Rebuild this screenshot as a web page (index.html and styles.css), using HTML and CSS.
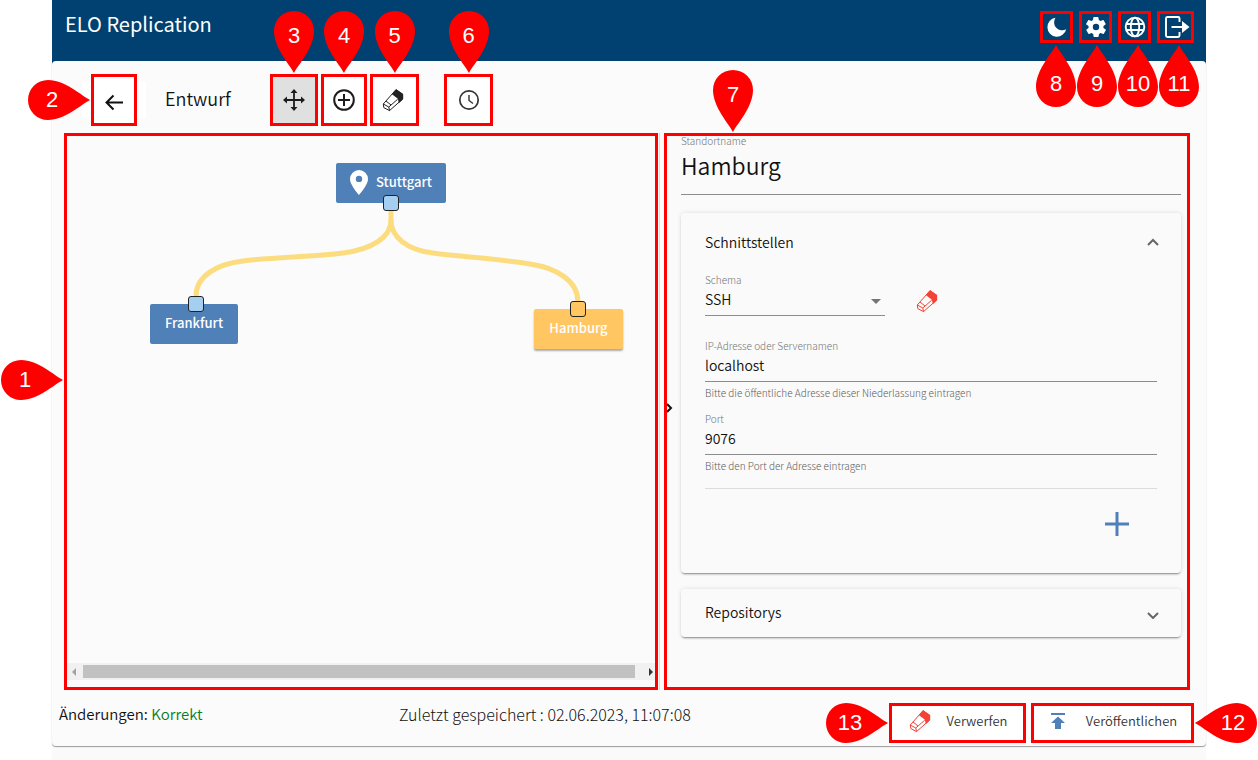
FILE: index.html
```html
<!DOCTYPE html>
<html lang="de">
<head>
<meta charset="utf-8">
<meta name="viewport" content="width=device-width, initial-scale=1">
<title>ELO Replication</title>
<link rel="stylesheet" href="styles.css">
</head>
<body>
<svg class="defs" aria-hidden="true">
  <symbol id="drop" viewBox="0 0 40 62"><path d="M20 62C16 54 0 37 0 20A20 20 0 0 1 40 20C40 37 24 54 20 62Z" fill="#f00"/></symbol>
  <symbol id="drop-up" viewBox="0 0 40 62"><path d="M20 0C16 8 0 25 0 42A20 20 0 0 0 40 42C40 25 24 8 20 0Z" fill="#f00"/></symbol>
  <symbol id="drop-right" viewBox="0 0 62 40"><path d="M62 20C54 16 37 0 20 0A20 20 0 0 0 20 40C37 40 54 24 62 20Z" fill="#f00"/></symbol>
  <symbol id="drop-left" viewBox="0 0 62 40"><path d="M0 20C8 16 25 0 42 0A20 20 0 0 1 42 40C25 40 8 24 0 20Z" fill="#f00"/></symbol>
  <symbol id="eraser" viewBox="0 0 24 24">
    <path d="M2.300 16L15 1.600L21.700 6.200V11L8.500 22.600L2.800 19.600Z" fill="none" stroke="currentColor" stroke-width="1" stroke-linejoin="round"/>
    <path d="M11 6.200L15 1.300L22 6V11.300L17.800 15.200L16.900 10.800Z" fill="currentColor"/>
    <path d="M2.300 16L7.800 19L16.700 11.200M7.800 19L8.500 22.600M5 13L10 17" fill="none" stroke="currentColor" stroke-width="1"/>
  </symbol>
</svg>

<div class="app">
  <header class="topbar">
    <h1 class="brand">ELO Replication</h1>
    <div class="top-actions">
      <button class="marked top-button" aria-label="Dunkelmodus"><svg width="24" height="24" viewBox="0 0 24 24"><path d="M10.500 2.800A9.500 9.500 0 1 0 21.200 14.200A8 8 0 0 1 10.500 2.800Z" fill="#fff"/></svg></button>
      <button class="marked top-button" aria-label="Einstellungen"><svg width="24" height="24" viewBox="0 0 24 24"><path d="M19.400 13c0-.3.1-.6.1-1s0-.7-.1-1l2.100-1.600c.2-.2.3-.4.1-.6l-2-3.500c-.1-.2-.4-.3-.6-.2l-2.500 1c-.5-.4-1.100-.7-1.700-1l-.4-2.600c0-.3-.2-.5-.5-.5h-4c-.2 0-.5.2-.5.4l-.4 2.700c-.6.2-1.100.6-1.700 1l-2.500-1c-.2-.1-.5 0-.6.2l-2 3.500c-.1.2-.1.5.1.6L4.600 11c0 .3-.1.7-.1 1s0 .7.1 1l-2.100 1.600c-.2.2-.3.4-.1.6l2 3.500c.1.2.4.3.6.2l2.500-1c.5.4 1.100.7 1.700 1l.4 2.600c0 .3.2.5.5.5h4c.3 0 .5-.2.5-.5l.4-2.600c.6-.3 1.200-.6 1.700-1l2.500 1c.2.1.5 0 .6-.2l2-3.500c.1-.2.1-.5-.1-.6zM12 15.200a3.200 3.200 0 1 1 0-6.400a3.200 3.200 0 0 1 0 6.400z" fill="#fff"/></svg></button>
      <button class="marked top-button" aria-label="Sprache"><svg width="24" height="24" viewBox="0 0 24 24" fill="none" stroke="#fff" stroke-width="1.900"><circle cx="12" cy="12" r="9.300"/><ellipse cx="12" cy="12" rx="4.200" ry="9.300"/><path d="M3.500 9H20.500M3.500 15H20.500"/></svg></button>
      <button class="marked top-button wide" aria-label="Abmelden"><svg width="28" height="24" viewBox="0 0 28 24"><path d="M17.500 7V3.500A1.500 1.500 0 0 0 16 2H5.500A1.500 1.500 0 0 0 4 3.500V20.500A1.500 1.500 0 0 0 5.500 22H16A1.500 1.500 0 0 0 17.500 20.500V17" fill="none" stroke="#fff" stroke-width="1.900"/><path d="M9.500 12H21" stroke="#fff" stroke-width="2"/><path d="M20 6L27.500 12L20 18Z" fill="#fff"/></svg></button>
    </div>
    <div class="top-pins">
      <span class="pin up"><svg><use href="#drop-up"/></svg><b>8</b></span>
      <span class="pin up"><svg><use href="#drop-up"/></svg><b>9</b></span>
      <span class="pin up"><svg><use href="#drop-up"/></svg><b>10</b></span>
      <span class="pin up"><svg><use href="#drop-up"/></svg><b>11</b></span>
    </div>
  </header>

  <main class="sheet">
    <div class="toolbar">
      <div class="back">
        <div class="tool">
          <button class="marked tool-button back-button" aria-label="Zurück"><svg width="20" height="20" viewBox="0 0 20 20" fill="none" stroke="#111" stroke-width="2"><path d="M19 10.500H2.500M9.500 3.500L2.500 10.500L9.500 17.500"/></svg></button>
          <span class="pin right"><svg><use href="#drop-right"/></svg><b>2</b></span>
        </div>
      </div>
      <h2 class="title">Entwurf</h2>
      <div class="tools">
        <div class="tool">
          <button class="marked tool-button active" aria-label="Verschieben"><svg width="22" height="22" viewBox="0 0 22 22"><path d="M11 3V19M3 11H19" stroke="#1c1c1c" stroke-width="1.800"/><path d="M11 0L14.500 4H7.500ZM11 22L14.500 18H7.500ZM0 11L4 7.500V14.500ZM22 11L18 7.500V14.500Z" fill="#1c1c1c"/></svg></button>
          <span class="pin down"><svg><use href="#drop"/></svg><b>3</b></span>
        </div>
        <div class="tool">
          <button class="marked tool-button narrow" aria-label="Hinzufügen"><svg width="22" height="22" viewBox="0 0 22 22" fill="none" stroke="#1c1c1c" stroke-width="2"><circle cx="11" cy="11" r="9.800"/><path d="M11 5V17M5 11H17"/></svg></button>
          <span class="pin down"><svg><use href="#drop"/></svg><b>4</b></span>
        </div>
        <div class="tool">
          <button class="marked tool-button erase" aria-label="Löschen"><svg class="dark" width="24" height="24"><use href="#eraser"/></svg></button>
          <span class="pin down"><svg><use href="#drop"/></svg><b>5</b></span>
        </div>
      </div>
      <div class="tool">
        <button class="marked tool-button" aria-label="Zeitplan"><svg width="22" height="22" viewBox="0 0 22 22" fill="none" stroke="#333" stroke-width="1.700"><circle cx="11" cy="11" r="9.200"/><path d="M11 6V11.500L15 14.500" stroke-width="1.400"/></svg></button>
        <span class="pin down"><svg><use href="#drop"/></svg><b>6</b></span>
      </div>
    </div>

    <div class="workspace">
      <section class="marked graph">
        <div class="canvas">
          <svg class="links" width="588" height="300" viewBox="0 0 588 300" fill="none" stroke="#fbdd80" stroke-width="5"><path d="M324 66V84C324 101 306 113 276 117C246 121 206 121 176 125C150 128 129 140 129 160"/><path d="M324 84C324 101 340 114 366 117C396 121 433 123 463 128C490 132 511 145 511 166"/></svg>
          <div class="node stuttgart"><svg width="18" height="25" viewBox="0 0 18 25"><path fill-rule="evenodd" d="M9 0A9 9 0 0 0 0 9C0 15 9 25 9 25C9 25 18 15 18 9A9 9 0 0 0 9 0ZM9 5.700A3.200 3.200 0 1 1 9 12.100A3.200 3.200 0 0 1 9 5.700Z" fill="#fff"/></svg>Stuttgart</div>
          <div class="node frankfurt">Frankfurt</div>
          <div class="node hamburg">Hamburg</div>
          <i class="port port-stuttgart"></i>
          <i class="port port-frankfurt"></i>
          <i class="port port-hamburg"></i>
        </div>
        <div class="scrollbar"><i class="arrow-left"></i><i class="thumb"></i><i class="arrow-right"></i></div>
        <span class="pin right pin-graph"><svg><use href="#drop-right"/></svg><b>1</b></span>
      </section>

      <div class="splitter"></div>

      <section class="marked details">
        <svg class="handle" width="6" height="12" viewBox="0 0 6 12" fill="none" stroke="#111" stroke-width="2"><path d="M0 2L4 6L0 10"/></svg>
        <div class="name-field">
          <label for="site">Standortname</label>
          <input id="site" type="text" value="Hamburg">
        </div>
        <div class="card">
          <button class="card-head open">Schnittstellen<svg width="12" height="8" viewBox="0 0 12 8" fill="none" stroke="#666" stroke-width="2"><path d="M1 7L6 2L11 7"/></svg></button>
          <div class="card-body">
            <div class="schema-row">
              <div class="field schema">
                <label for="schema">Schema</label>
                <select id="schema"><option>SSH</option></select>
              </div>
              <button class="icon-button" aria-label="Schnittstelle löschen"><svg class="red" width="24" height="24"><use href="#eraser"/></svg></button>
            </div>
            <div class="field">
              <label for="host">IP-Adresse oder Servernamen</label>
              <input id="host" type="text" value="localhost">
              <p class="hint">Bitte die öffentliche Adresse dieser Niederlassung eintragen</p>
            </div>
            <div class="field">
              <label for="port">Port</label>
              <input id="port" type="text" value="9076">
              <p class="hint">Bitte den Port der Adresse eintragen</p>
            </div>
            <hr>
            <div class="add-row"><button class="icon-button" aria-label="Schnittstelle hinzufügen"><svg width="24" height="24" viewBox="0 0 24 24" stroke="#5080b8" stroke-width="3"><path d="M12 0V24M0 12H24"/></svg></button></div>
          </div>
        </div>
        <div class="card">
          <button class="card-head">Repositorys<svg width="12" height="14" viewBox="0 0 12 14" fill="none" stroke="#666" stroke-width="2"><path d="M1 8L6 13L11 8"/></svg></button>
        </div>
        <span class="pin down pin-details"><svg><use href="#drop"/></svg><b>7</b></span>
      </section>
    </div>

    <footer class="footer">
      <p class="state">Änderungen: <span class="ok">Korrekt</span></p>
      <p class="saved">Zuletzt gespeichert : <time>02.06.2023, 11:07:08</time></p>
      <div class="foot-actions">
        <div class="tool">
          <button class="marked action"><svg class="red" width="24" height="24"><use href="#eraser"/></svg>Verwerfen</button>
          <span class="pin right"><svg><use href="#drop-right"/></svg><b>13</b></span>
        </div>
        <div class="tool">
          <button class="marked action publish"><svg width="16" height="16" viewBox="0 0 16 16" fill="#5080b8"><path d="M1 0H15V2H1ZM8 3.500L15 10H11V16H5V10H1Z"/></svg>Veröffentlichen</button>
          <span class="pin left"><svg><use href="#drop-left"/></svg><b>12</b></span>
        </div>
      </div>
    </footer>
  </main>
</div>
</body>
</html>
```

FILE: styles.css
```css
* { box-sizing: border-box; }

body {
  margin: 0;
  background: #fff;
  color: #111;
  font-family: "Noto Sans CJK SC", "Source Sans Pro", sans-serif;
  font-size: 14px;
  font-weight: 350;
  line-height: 20px;
}

h1, h2, p { margin: 0; font-weight: inherit; }
button, input, select { font: inherit; color: inherit; }
button { padding: 0; border: 0; background: none; display: flex; align-items: center; justify-content: center; }
.defs { position: absolute; width: 0; height: 0; }

.app {
  display: flex;
  flex-direction: column;
  min-height: 100vh;
  margin: 0 52px;
  padding-bottom: 14px;
  background: linear-gradient(#004171 80px, #fafafa 80px);
}

.marked { border: 3px solid #f00; }

/* Numbered callouts */
.pin { position: absolute; width: 40px; height: 62px; z-index: 5; }
.pin svg { display: block; width: 100%; height: 100%; }
.pin b {
  position: absolute;
  inset: 0;
  display: flex;
  align-items: center;
  justify-content: center;
  color: #fff;
  font: 400 22px/24px "Liberation Sans", Arial, sans-serif;
}
.pin.down b { padding-bottom: 12px; }
.pin.up b { padding-top: 16px; }
.pin.right, .pin.left { width: 62px; height: 40px; }
.pin.right b { padding-right: 14px; }
.pin.left b { padding-left: 14px; }
.tool { position: relative; }
.tool .pin.down { bottom: calc(100% + 1px); left: calc(50% - 20px); }
.tool .pin.right { right: calc(100% + 1px); top: calc(50% - 20px); }
.tool .pin.left { left: calc(100% + 1px); top: calc(50% - 20px); }

/* Header */
.topbar {
  position: relative;
  display: flex;
  justify-content: space-between;
  height: 61px;
  padding: 11px 12px 0 13px;
}
.brand { color: #fff; font-size: 20px; font-weight: 400; line-height: 26px; }
.top-actions { display: flex; gap: 6px; }
.top-button { width: 33px; height: 32px; }
.top-button.wide { width: 37px; }
.top-pins { position: absolute; top: 45px; right: 7px; display: flex; gap: 1px; z-index: 5; }
.top-pins .pin { position: relative; }

.sheet {
  flex: 1;
  display: flex;
  flex-direction: column;
  border-radius: 4px;
  background: #fbfbfb;
  box-shadow: 0 1px 1px #999;
}

/* Toolbar */
.toolbar { display: flex; align-items: center; height: 72px; padding: 6px 0 0 30px; }
.back { padding: 0 9px; background: linear-gradient(#fff, #fff) center / 100% 36px no-repeat; }
.tool-button { width: 49px; height: 52px; background: #fff; }
.tool-button.narrow { width: 46px; }
.tool-button.active { width: 48px; background: #e0e0e0; }
.erase { padding-right: 3px; }
.back-button { width: 46px; padding-top: 4px; }
.title { width: 105px; margin-left: 19px; padding-bottom: 4px; font-size: 18px; line-height: 24px; }
.tools { display: flex; gap: 3px; margin-right: 25px; }
.dark { color: #222; }
.red { color: #f44336; }

/* Workspace */
.workspace { flex: 1; display: grid; grid-template-columns: 594fr 6px 526fr; padding: 0 16px 0 12px; }
.graph { position: relative; display: flex; flex-direction: column; min-width: 0; }
.canvas { position: relative; flex: 1; overflow: hidden; }
.links { position: absolute; top: 0; left: 0; }
.splitter { border-left: 1px solid #fbfbfb; background: linear-gradient(90deg, #ddd 1px, transparent 1px); }
.pin-graph { right: calc(100% + 4px); top: 224px; }

.node {
  position: absolute;
  display: flex;
  align-items: center;
  justify-content: center;
  gap: 8px;
  height: 40px;
  padding-bottom: 2px;
  border-radius: 2px;
  background: #5080b8;
  color: #fff;
  font-size: 13px;
  font-weight: 500;
}
.stuttgart { left: 269px; top: 27px; width: 110px; }
.frankfurt { left: 83px; top: 168px; width: 88px; }
.hamburg { left: 467px; top: 173px; width: 89px; background: #ffc662; box-shadow: 0 2px 2px #aaa; }
.port {
  position: absolute;
  width: 16px;
  height: 16px;
  border: 1px solid #222;
  border-radius: 3px;
  background: #a5cff0;
}
.port-stuttgart { left: 316px; top: 59px; }
.port-frankfurt { left: 121px; top: 160px; }
.port-hamburg { left: 503px; top: 165px; background: #ffc662; }

.scrollbar { display: flex; align-items: center; height: 17px; margin-bottom: 7px; padding: 0 2px 0 5px; background: #f1f1f1; }
.thumb { flex: 1; height: 13px; margin: 0 14px 0 7px; background: #c1c1c1; }
.arrow-left, .arrow-right { border: 4px solid transparent; border-width: 4px 0; }
.arrow-left { border-right: 4px solid #a3a3a3; }
.arrow-right { border-left: 4px solid #333; }

/* Details */
.details {
  position: relative;
  display: flex;
  flex-direction: column;
  gap: 16px;
  min-width: 0;
  padding: 0 6px 48px 14px;
  background: #fafafa;
}
.handle { position: absolute; left: 0; top: 266px; }
.pin-details { left: 46px; bottom: calc(100% + 4px); }
label { display: block; color: #757575; font-size: 10px; font-weight: 300; line-height: 12px; }
.name-field { padding-bottom: 2px; }
.name-field label { line-height: 10px; }
input, select {
  display: block;
  width: 100%;
  height: 30px;
  padding: 0 0 3px;
  border: 0;
  border-bottom: 1px solid #8c8c8c;
  border-radius: 0;
  background: transparent;
  outline: 0;
  appearance: none;
}
.name-field input { height: 49px; padding-bottom: 10px; font-size: 23px; }

.card { border-radius: 4px; background: #fafafa; box-shadow: 0 2px 2px -1px #888, 0 0 4px #ddd; }
.card-head { width: 100%; height: 48px; padding: 0 22px 2px 24px; justify-content: space-between; }
.card-head.open { height: 61px; padding-bottom: 3px; }
.card-body { padding: 0 24px 34px; }
.schema-row { display: flex; align-items: flex-end; gap: 30px; margin-bottom: 24px; }
.schema { position: relative; width: 180px; }
.schema::after {
  content: "";
  position: absolute;
  right: 4px;
  bottom: 12px;
  border: 5px solid transparent;
  border-top-color: #757575;
  border-bottom: 0;
}
.icon-button { padding-bottom: 3px; }
.field + .field { margin-top: 14px; }
.hint { margin-top: 5px; color: #606060; font-size: 10px; font-weight: 300; line-height: 12px; }
hr { width: 100%; height: 1px; margin: 16px 0 0; border: 0; background: #dcdcdc; }
.add-row { display: flex; justify-content: flex-end; padding: 23px 28px 0 0; }

/* Footer */
.footer { display: flex; align-items: flex-start; height: 56px; padding: 13px 12px 0 7px; font-size: 15px; }
.state { width: 340px; line-height: 22px; }
.ok { color: #0a7d1c; }
.saved { flex: 1; font-size: 16px; font-weight: 300; line-height: 22px; }
.foot-actions { display: flex; gap: 5px; }
.action { height: 40px; width: 137px; gap: 15px; padding-bottom: 4px; background: #fff; color: #333; font-size: 13px; }
.publish { width: 163px; gap: 20px; padding-left: 2px; }
```
